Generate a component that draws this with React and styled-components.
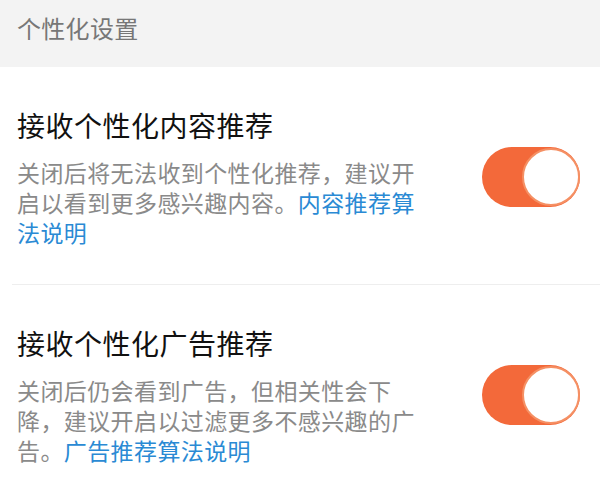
import styled, { createGlobalStyle } from "styled-components"

const GlobalStyle = createGlobalStyle`
    body {
        margin: 0;
        background: #ffffff;
        font-family: "Noto Sans CJK SC", "Noto Sans", sans-serif;
    }
`

const settings = [
    {
        title: "接收个性化内容推荐",
        text: "关闭后将无法收到个性化推荐，建议开启以看到更多感兴趣内容。",
        link: "内容推荐算法说明",
        on: true,
    },
    {
        title: "接收个性化广告推荐",
        text: "关闭后仍会看到广告，但相关性会下降，建议开启以过滤更多不感兴趣的广告。",
        link: "广告推荐算法说明",
        on: true,
    },
]

const App = () => {
    return (
        <Page>
            <GlobalStyle />
            <Header>个性化设置</Header>
            <List>
                {settings.map((item, i) => (
                    <Row key={item.title} $last={i === settings.length - 1}>
                        <TextCol>
                            <Title>{item.title}</Title>
                            <Desc>
                                {item.text}
                                <Link>{item.link}</Link>
                            </Desc>
                        </TextCol>
                        <Toggle $on={item.on}>
                            <Knob />
                        </Toggle>
                    </Row>
                ))}
            </List>
        </Page>
    )
}

export default App

const Page = styled.div`
    width: 600px;
    height: 501px;
    overflow: hidden;
    background: #ffffff;
`

const Header = styled.div`
    height: 67px;
    box-sizing: border-box;
    padding: 10px 17px 0;
    background: #f3f3f3;
    color: #777777;
    font-size: 24px;
    letter-spacing: 0.3px;
    line-height: 36px;
`

const List = styled.div`
    display: flex;
    flex-direction: column;
`

const Row = styled.div`
    display: flex;
    align-items: center;
    justify-content: space-between;
    padding: 40px 20px 38px 17px;
    position: relative;

    &::after {
        content: "";
        display: ${(p) => (p.$last ? "none" : "block")};
        position: absolute;
        left: 12px;
        right: 0;
        bottom: 0;
        border-bottom: 1px solid #eeeeee;
    }
`

const TextCol = styled.div`
    width: 420px;
    display: flex;
    flex-direction: column;
    gap: 14px;
`

const Title = styled.div`
    color: #111111;
    font-size: 28px;
    letter-spacing: 0.5px;
    line-height: 36px;
`

const Desc = styled.div`
    color: #8a8a8a;
    font-size: 23px;
    letter-spacing: 0.4px;
    line-height: 30px;
`

const Link = styled.span`
    color: #2a8ad4;
`

const Toggle = styled.div`
    width: 98px;
    height: 60px;
    box-sizing: border-box;
    border-radius: 30px;
    background: ${(p) => (p.$on ? "#f3693a" : "#dddddd")};
    display: flex;
    align-items: center;
    justify-content: ${(p) => (p.$on ? "flex-end" : "flex-start")};
    flex-shrink: 0;
`

const Knob = styled.div`
    width: 58px;
    height: 58px;
    box-sizing: border-box;
    border-radius: 50%;
    background: #ffffff;
    border: 2px solid #f59064;
`
